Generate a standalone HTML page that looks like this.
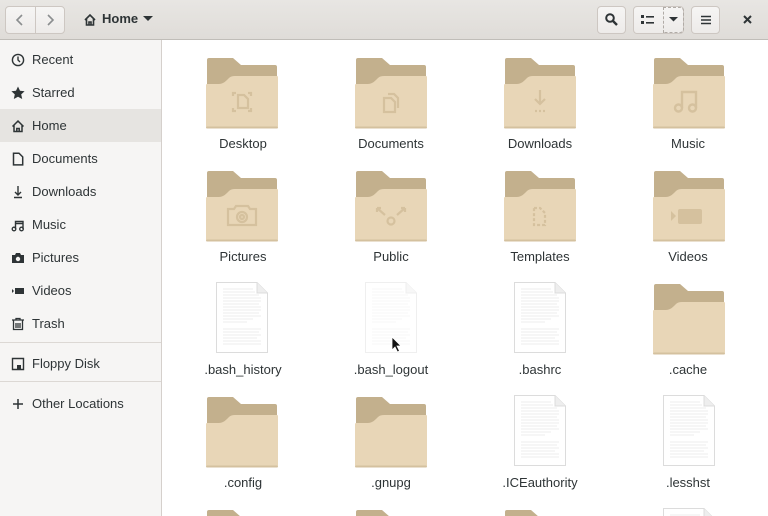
<!DOCTYPE html>
<html style="width:768px;height:516px;overflow:hidden"><head><meta charset="utf-8"><style>
*{margin:0;padding:0;box-sizing:border-box}
body{width:768px;height:516px;overflow:hidden;font-family:"Liberation Sans","DejaVu Sans",sans-serif;font-size:13px;color:#2e3436;background:#fff;position:relative}
.hdr{position:absolute;left:0;top:0;width:768px;height:40px;background:linear-gradient(#e8e6e3,#dfdcd8);border-bottom:1px solid #c0bdb8}
.btn{position:absolute;top:6px;height:28px;background:linear-gradient(#f6f5f4,#edebe9);border:1px solid #cdc7c2;border-radius:4px}
.side{position:absolute;left:0;top:40px;width:162px;height:476px;background:#f6f5f4;border-right:1px solid #d5d0cc}
.it{position:absolute;left:0;width:161px;height:33px;line-height:33px;padding-left:32px;font-size:13px}
.it svg{position:absolute;left:11px;top:10px}
.sep{position:absolute;left:0;width:161px;height:1px;background:#dcd8d4}
.lbl{position:absolute;width:148px;text-align:center;font-size:13px}
.ic{position:absolute}
</style></head><body>
<svg width="0" height="0" style="position:absolute">
<defs>
<symbol id="fold" viewBox="0 0 72 72">
<path d="M1 2q0-2 2-2H27l8 7H69q2 0 2 2V40H1z" fill="#c3b08d"/>
<path d="M0 27q0-1 1-1H13q4 0 8-4l2-2q2-2 6-2H71q1 0 1 1V68q0 2-2 2H2q-2 0-2-2z" fill="#e8d6b7"/>
<rect x="0" y="68.5" width="72" height="2" rx="1" fill="#d4c19f"/>
</symbol>
<symbol id="doc" viewBox="0 0 54 74">
<path d="M1.5 1.5H42l10.5 10.5V71.5H1.5z" fill="#fff" stroke="#dcdcdc"/>
<path d="M42 1.5V12h10.5" fill="#eee" stroke="#dcdcdc"/>
<g stroke="#dedede" stroke-width=".6">
<path d="M8 8h30M8 11h32M8 14h36M8 17h38M8 20h38M8 23h36M8 26h38M8 29h38M8 32h36M8 35h38M8 38h30M8 41h24"/>
<path d="M8 48h38M8 51h36M8 54h38M8 57h34M8 60h38M8 63h38"/>
</g>
</symbol>
</defs></svg>

<div class="hdr">
 <div class="btn" style="left:5px;width:60px"></div>
 <div style="position:absolute;left:35px;top:7px;width:1px;height:26px;background:#cdc7c2"></div>
 <svg style="position:absolute;left:14px;top:13px" width="12" height="14"><path d="M8 2L3 7l5 5" fill="none" stroke="#8b8e8f" stroke-width="1.6"/></svg>
 <svg style="position:absolute;left:44px;top:13px" width="12" height="14"><path d="M4 2l5 5-5 5" fill="none" stroke="#8b8e8f" stroke-width="1.6"/></svg>
 <svg style="position:absolute;left:83px;top:13px" width="14" height="14"><path d="M2 7L7 2l5 5M3.5 6v6h7V6M6 12V9h2v3" fill="none" stroke="#2e3436" stroke-width="1.6"/></svg>
 <div style="position:absolute;left:102px;top:11px;font-weight:bold;font-size:13px">Home</div>
 <svg style="position:absolute;left:143px;top:16px" width="10" height="6"><path d="M0 0h10L5 5z" fill="#2e3436"/></svg>
 <div class="btn" style="left:597px;width:29px"></div>
 <svg style="position:absolute;left:604px;top:12px" width="16" height="16"><circle cx="6" cy="6" r="3.8" fill="none" stroke="#2e3436" stroke-width="2"/><path d="M9 9l4 4" stroke="#2e3436" stroke-width="2.4"/></svg>
 <div class="btn" style="left:633px;width:51px"></div>
 <div style="position:absolute;left:663px;top:7px;width:21px;height:26px;border:1px dashed #b0aba6;border-radius:0 4px 4px 0"></div>
 <svg style="position:absolute;left:641px;top:14px" width="14" height="12"><rect x="0" y="1" width="3" height="3" fill="#2e3436"/><rect x="0" y="7" width="3" height="3" fill="#2e3436"/><rect x="5" y="2" width="8" height="1.6" fill="#2e3436"/><rect x="5" y="8" width="8" height="1.6" fill="#2e3436"/></svg>
 <svg style="position:absolute;left:669px;top:17px" width="10" height="6"><path d="M0 0h9L4.5 4.5z" fill="#2e3436"/></svg>
 <div class="btn" style="left:691px;width:29px"></div>
 <svg style="position:absolute;left:700px;top:14px" width="12" height="12"><path d="M1 2.5h10M1 6h10M1 9.5h10" stroke="#2e3436" stroke-width="1.6"/></svg>
 <svg style="position:absolute;left:742px;top:14px" width="12" height="12"><path d="M2 2l7 7M9 2L2 9" stroke="#2e3436" stroke-width="2"/></svg>
</div>

<div class="side">
 <div class="it" style="top:3px"><svg width="14" height="14"><circle cx="7" cy="7" r="5.6" fill="none" stroke="#2e3436" stroke-width="1.4"/><path d="M7 3.5V7l2 2" fill="none" stroke="#2e3436" stroke-width="1.4"/></svg>Recent</div>
 <div class="it" style="top:36px"><svg width="14" height="14"><path d="M7 .5l2 4.3 4.6.5-3.4 3.1 1 4.6L7 10.7 2.8 13l1-4.6L.4 5.3 5 4.8z" fill="#2e3436"/></svg>Starred</div>
 <div class="it" style="top:69px;background:#e6e4e1"><svg width="14" height="14"><path d="M1.5 7.5L7 2l5.5 5.5M3 6.5v6h8v-6M5.8 12.5v-3h2.4v3" fill="none" stroke="#2e3436" stroke-width="1.5"/></svg>Home</div>
 <div class="it" style="top:102px"><svg width="14" height="14"><path d="M2.5 1.2h5.5l3.7 3.7v8H2.5z" fill="none" stroke="#2e3436" stroke-width="1.5"/></svg>Documents</div>
 <div class="it" style="top:135px"><svg width="14" height="14"><path d="M7 1v9M4 7l3 3 3-3M3 12.5h8" fill="none" stroke="#2e3436" stroke-width="1.4"/></svg>Downloads</div>
 <div class="it" style="top:168px"><svg width="14" height="14"><path d="M4.5 11V3.5h7.5V11M4.5 5.5h7.5" fill="none" stroke="#2e3436" stroke-width="1.4"/><circle cx="3" cy="11" r="1.8" fill="none" stroke="#2e3436" stroke-width="1.3"/><circle cx="10.5" cy="11" r="1.8" fill="none" stroke="#2e3436" stroke-width="1.3"/></svg>Music</div>
 <div class="it" style="top:201px"><svg width="14" height="14"><path d="M1 4h3l1-2h4l1 2h3v8H1z" fill="#2e3436"/><circle cx="7" cy="8" r="2.2" fill="#f6f5f4"/></svg>Pictures</div>
 <div class="it" style="top:234px"><svg width="14" height="14"><path d="M1 5l2 2-2 2z" fill="#2e3436"/><rect x="4" y="4" width="9" height="6" fill="#2e3436"/></svg>Videos</div>
 <div class="it" style="top:267px"><svg width="14" height="14"><path d="M1 3h12M5 3V1.5h4V3M2.5 3.5v9h9v-9M5 6v5M7 6v5M9 6v5" fill="none" stroke="#2e3436" stroke-width="1.3"/></svg>Trash</div>
 <div class="sep" style="top:302px"></div>
 <div class="it" style="top:307px"><svg width="14" height="14"><path d="M1.5 1.5h11v11h-11z" fill="none" stroke="#2e3436" stroke-width="1.4"/><rect x="6" y="8" width="4" height="4" fill="#2e3436"/></svg>Floppy Disk</div>
 <div class="sep" style="top:341px"></div>
 <div class="it" style="top:347px"><svg width="14" height="14"><path d="M7 2v10M2 7h10" stroke="#2e3436" stroke-width="1.5"/></svg>Other Locations</div>
</div>

<svg class="ic" style="left:206px;top:58px" width="72" height="72"><use href="#fold"/><g fill="none" stroke="#d5c19e" stroke-width="2.2"><path d="M27 38v-3h3M42 35h3v3M27 50v3h3M42 53h3v-3"/><path d="M32 37h6l4 4v9H32z"/></g></svg>
<svg class="ic" style="left:355px;top:58px" width="72" height="72"><use href="#fold"/><g fill="none" stroke="#d5c19e" stroke-width="2.2"><path d="M29 40h7l4 4v10H29z"/><path d="M33 36h6l4 4v10"/></g></svg>
<svg class="ic" style="left:504px;top:58px" width="72" height="72"><use href="#fold"/><g fill="none" stroke="#d5c19e" stroke-width="2.2"><path d="M36 32v13M31 41l5 5 5-5"/><path d="M31 53h10" stroke-dasharray="2 2"/></g></svg>
<svg class="ic" style="left:653px;top:58px" width="72" height="72"><use href="#fold"/><g fill="none" stroke="#d5c19e" stroke-width="2.4"><path d="M29 50V34h14v16"/><circle cx="25.5" cy="50" r="3.5"/><circle cx="39.5" cy="50" r="3.5"/></g></svg>
<div class="lbl" style="left:169px;top:136px">Desktop</div>
<div class="lbl" style="left:317px;top:136px">Documents</div>
<div class="lbl" style="left:466px;top:136px">Downloads</div>
<div class="lbl" style="left:614px;top:136px">Music</div>

<svg class="ic" style="left:206px;top:171px" width="72" height="72"><use href="#fold"/><g fill="none" stroke="#d5c19e" stroke-width="2.2"><path d="M22 38h6l2-3h12l2 3h6v16H22z"/><circle cx="36" cy="46" r="5"/><circle cx="36" cy="46" r="2"/></g></svg>
<svg class="ic" style="left:355px;top:171px" width="72" height="72"><use href="#fold"/><g fill="none" stroke="#d5c19e" stroke-width="2.2"><path d="M22 37l8 7M22 37v4M22 37h4M50 37l-8 7M50 37v4M50 37h-4"/><circle cx="36" cy="50" r="3.5"/></g></svg>
<svg class="ic" style="left:504px;top:171px" width="72" height="72"><use href="#fold"/><g fill="none" stroke="#d5c19e" stroke-width="2.2"><path d="M30 37h6l5 5v12H30z" stroke-dasharray="3 2"/></g></svg>
<svg class="ic" style="left:653px;top:171px" width="72" height="72"><use href="#fold"/><g fill="#d5c19e"><path d="M18 40l5 5-5 5z"/><rect x="25" y="38" width="24" height="15" rx="2"/></g></svg>
<div class="lbl" style="left:169px;top:249px">Pictures</div>
<div class="lbl" style="left:317px;top:249px">Public</div>
<div class="lbl" style="left:466px;top:249px">Templates</div>
<div class="lbl" style="left:614px;top:249px">Videos</div>

<svg class="ic" style="left:215px;top:281px" width="54" height="74"><use href="#doc"/></svg>
<svg class="ic" style="left:364px;top:281px;opacity:.45" width="54" height="74"><use href="#doc"/></svg>
<svg class="ic" style="left:391px;top:336px" width="12" height="18"><path d="M1 1v13l3-3 2.5 5 2-1-2.5-5H10z" fill="#111" stroke="#fff" stroke-width=".8"/></svg>
<svg class="ic" style="left:513px;top:281px" width="54" height="74"><use href="#doc"/></svg>
<svg class="ic" style="left:653px;top:284px" width="72" height="72"><use href="#fold"/></svg>
<div class="lbl" style="left:169px;top:362px">.bash_history</div>
<div class="lbl" style="left:317px;top:362px">.bash_logout</div>
<div class="lbl" style="left:466px;top:362px">.bashrc</div>
<div class="lbl" style="left:614px;top:362px">.cache</div>

<svg class="ic" style="left:206px;top:397px" width="72" height="72"><use href="#fold"/></svg>
<svg class="ic" style="left:355px;top:397px" width="72" height="72"><use href="#fold"/></svg>
<svg class="ic" style="left:513px;top:394px" width="54" height="74"><use href="#doc"/></svg>
<svg class="ic" style="left:662px;top:394px" width="54" height="74"><use href="#doc"/></svg>
<div class="lbl" style="left:169px;top:475px">.config</div>
<div class="lbl" style="left:317px;top:475px">.gnupg</div>
<div class="lbl" style="left:466px;top:475px">.ICEauthority</div>
<div class="lbl" style="left:614px;top:475px">.lesshst</div>

<svg class="ic" style="left:206px;top:510px" width="72" height="6"><use href="#fold" width="72" height="72"/></svg>
<svg class="ic" style="left:355px;top:510px" width="72" height="6"><use href="#fold" width="72" height="72"/></svg>
<svg class="ic" style="left:504px;top:510px" width="72" height="6"><use href="#fold" width="72" height="72"/></svg>
<svg class="ic" style="left:662px;top:507px" width="54" height="9"><use href="#doc" width="54" height="74"/></svg>
</body></html>
